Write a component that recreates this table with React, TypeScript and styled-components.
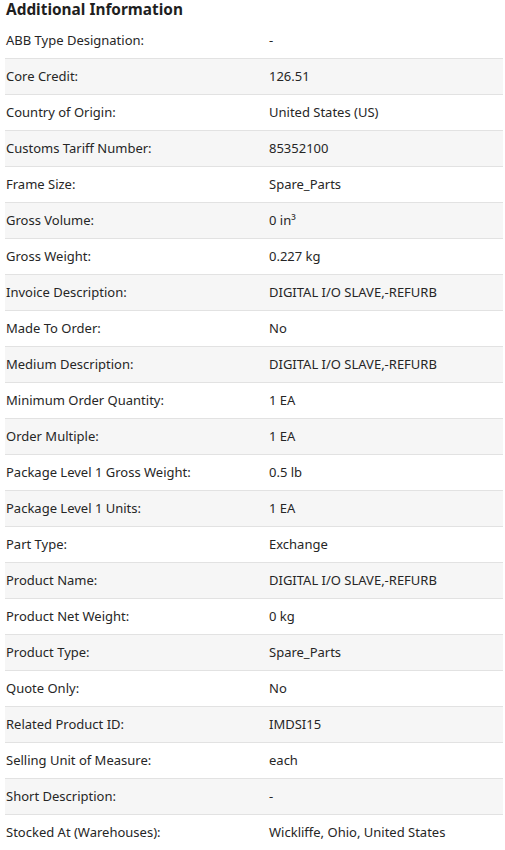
import React from "react";
import styled, { createGlobalStyle } from "styled-components";

const GlobalStyle = createGlobalStyle`
  body {
    margin: 0;
    background: #fff;
    font-family: "Noto Sans", "Open Sans", Arial, sans-serif;
    color: #262626;
  }
`;

const Section = styled.section`
  padding: 0 2px 0 5px;
`;

const Title = styled.h2`
  margin: 0;
  padding: 0 0 0 1px;
  height: 23px;
  font-size: 15.4px;
  font-weight: 700;
  line-height: 20px;
  color: #1f1f1f;
`;

const Row = styled.div<{ $shaded: boolean }>`
  display: grid;
  grid-template-columns: 264px 1fr;
  align-items: center;
  height: 36px;
  box-sizing: border-box;
  padding-bottom: 1px;
  border-bottom: 1px solid #e2e2e2;
  background: ${(p) => (p.$shaded ? "#f6f6f6" : "#fff")};
  font-size: 13px;
`;

const Label = styled.div`
  padding-left: 1px;
`;

const Value = styled.div`
  padding-left: 0;
`;

const rows: [string, React.ReactNode][] = [
  ["ABB Type Designation:", "-"],
  ["Core Credit:", "126.51"],
  ["Country of Origin:", "United States (US)"],
  ["Customs Tariff Number:", "85352100"],
  ["Frame Size:", "Spare_Parts"],
  ["Gross Volume:", "0 in³"],
  ["Gross Weight:", "0.227 kg"],
  ["Invoice Description:", "DIGITAL I/O SLAVE,-REFURB"],
  ["Made To Order:", "No"],
  ["Medium Description:", "DIGITAL I/O SLAVE,-REFURB"],
  ["Minimum Order Quantity:", "1 EA"],
  ["Order Multiple:", "1 EA"],
  ["Package Level 1 Gross Weight:", "0.5 lb"],
  ["Package Level 1 Units:", "1 EA"],
  ["Part Type:", "Exchange"],
  ["Product Name:", "DIGITAL I/O SLAVE,-REFURB"],
  ["Product Net Weight:", "0 kg"],
  ["Product Type:", "Spare_Parts"],
  ["Quote Only:", "No"],
  ["Related Product ID:", "IMDSI15"],
  ["Selling Unit of Measure:", "each"],
  ["Short Description:", "-"],
  ["Stocked At (Warehouses):", "Wickliffe, Ohio, United States"],
];

export default function App() {
  return (
    <>
      <GlobalStyle />
      <Section>
        <Title>Additional Information</Title>
        {rows.map(([label, value], i) => (
          <Row key={label} $shaded={i % 2 === 1}>
            <Label>{label}</Label>
            <Value>{value}</Value>
          </Row>
        ))}
      </Section>
    </>
  );
}
